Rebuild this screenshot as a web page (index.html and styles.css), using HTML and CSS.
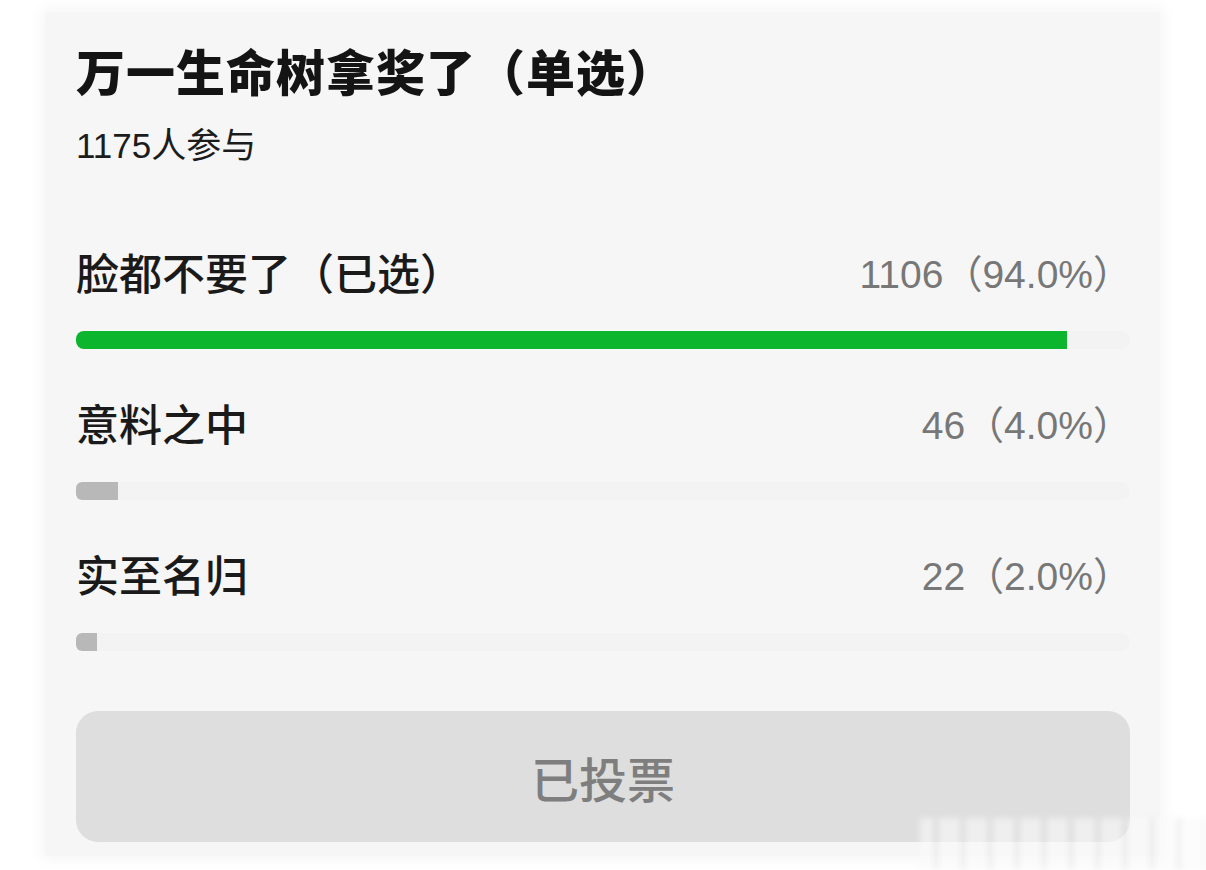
FILE: index.html
```
<!DOCTYPE html>
<html lang="zh-CN">

<head>
    <meta charset="UTF-8">
    <meta name="viewport" content="width=device-width, initial-scale=1.0">
    <title>投票</title>
    <link rel="stylesheet" href="styles.css">
</head>

<body>
    <div class="page">
        <div class="poll">
            <h1 class="poll-title">万一生命树拿奖了（单选）</h1>
            <p class="poll-count">1175人参与</p>

            <div class="option">
                <div class="option-row">
                    <span class="option-name">脸都不要了（已选）</span>
                    <span class="option-votes">1106（94.0%）</span>
                </div>
                <div class="bar">
                    <div class="bar-fill chosen" style="width: 94%"></div>
                </div>
            </div>

            <div class="option">
                <div class="option-row">
                    <span class="option-name">意料之中</span>
                    <span class="option-votes">46（4.0%）</span>
                </div>
                <div class="bar">
                    <div class="bar-fill" style="width: 4%"></div>
                </div>
            </div>

            <div class="option">
                <div class="option-row">
                    <span class="option-name">实至名归</span>
                    <span class="option-votes">22（2.0%）</span>
                </div>
                <div class="bar">
                    <div class="bar-fill" style="width: 2%"></div>
                </div>
            </div>

            <button class="vote-btn" disabled>已投票</button>
        </div>

        <!-- blurred watermark in the corner -->
        <div class="watermark"></div>
    </div>
</body>

</html>
```

FILE: styles.css
```
body {
    margin: 0;
    padding: 0;
    background: #ffffff;
    font-family: "Liberation Sans", "Noto Sans CJK SC", sans-serif;
}

.page {
    position: relative;
    width: 1206px;
    height: 870px;
    overflow: hidden;
}

.poll {
    margin: 12px 0 0 45px;
    width: 1115px;
    box-sizing: border-box;
    padding: 27px 30px 14px 31px;
    background: #f6f6f6;
    box-shadow: 0 0 14px 4px #f6f6f6;
}

.poll-title {
    margin: 0;
    font-family: "Noto Sans CJK SC", sans-serif;
    font-size: 49px;
    line-height: 62px;
    font-weight: 900;
    color: #141414;
    letter-spacing: 1px;
}

.poll-count {
    margin: 23px 0 0;
    font-size: 35px;
    line-height: 44px;
    color: #1c1c1c;
}

.option {
    margin-top: 45px;
}

.option:first-of-type {
    margin-top: 75px;
}

.option-row {
    display: flex;
    justify-content: space-between;
    align-items: center;
    height: 56px;
}

.option-name {
    font-family: "Noto Sans CJK SC", sans-serif;
    font-size: 43px;
    font-weight: 500;
    color: #1a1a1a;
}

.option-votes {
    font-size: 39px;
    color: #777777;
    margin-right: -2px;
}

.bar {
    margin-top: 32px;
    height: 18px;
    border-radius: 9px;
    background: #f3f3f3;
}

.bar-fill {
    height: 100%;
    min-width: 20px;
    border-radius: 6px 0 0 6px;
    background: #b8b8b8;
}

.bar-fill.chosen {
    background: #0bb52d;
    border-radius: 8px 0 0 8px;
}

.vote-btn {
    display: block;
    width: 100%;
    height: 131px;
    margin-top: 60px;
    border: none;
    border-radius: 22px;
    background: #dedede;
    color: #7e7e7e;
    font-family: "Noto Sans CJK SC", sans-serif;
    font-size: 48px;
    font-weight: 500;
}

.watermark {
    position: absolute;
    left: 920px;
    top: 818px;
    width: 286px;
    height: 52px;
    background:
        repeating-linear-gradient(90deg,
            rgba(250, 250, 250, 0.6) 0 14px,
            rgba(205, 205, 205, 0.35) 14px 18px,
            rgba(250, 250, 250, 0.6) 18px 27px);
    filter: blur(3px);
}
```
